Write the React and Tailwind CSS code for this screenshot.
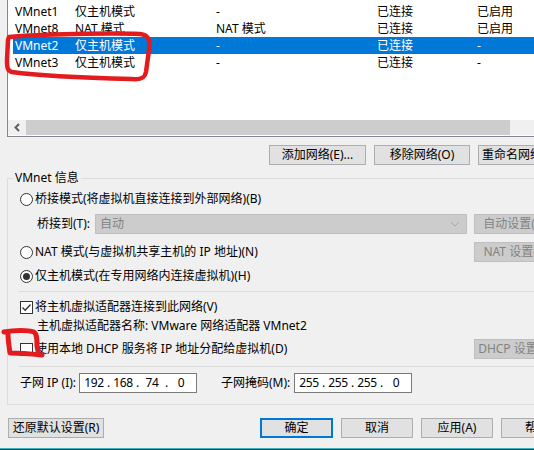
const rows = [
  { name: 'VMnet0', type: '桥接模式', ext: '自动桥接', host: '-', dhcp: '-' },
  { name: 'VMnet1', type: '仅主机模式', ext: '-', host: '已连接', dhcp: '已启用' },
  { name: 'VMnet8', type: 'NAT 模式', ext: 'NAT 模式', host: '已连接', dhcp: '已启用' },
  { name: 'VMnet2', type: '仅主机模式', ext: '-', host: '已连接', dhcp: '-', selected: true },
  { name: 'VMnet3', type: '仅主机模式', ext: '-', host: '已连接', dhcp: '-' },
]

function Radio({ checked }) {
  return (
    <span className="w-[13px] h-[13px] rounded-full border border-[#333333] bg-white flex items-center justify-center shrink-0">
      {checked && <span className="w-[7px] h-[7px] rounded-full bg-[#333333]" />}
    </span>
  )
}

function Checkbox({ checked }) {
  return (
    <span className="w-[13px] h-[13px] border border-[#333333] bg-white flex items-center justify-center shrink-0">
      {checked && (
        <svg width="11" height="11" viewBox="0 0 11 11">
          <polyline points="1.5,5.5 4.2,8.3 9.5,2.5" fill="none" stroke="#333" strokeWidth="1.3" />
        </svg>
      )}
    </span>
  )
}

function Button({ children, className = '' }) {
  return (
    <div className={`h-[20px] shrink-0 flex items-center justify-center bg-[#e1e1e1] border border-[#adadad] ${className}`}>
      {children}
    </div>
  )
}

function DisabledButton({ children }) {
  return (
    <div className="h-[20px] w-[92px] shrink-0 flex items-center justify-center bg-[#cccccc] border border-[#bfbfbf] text-[#838383]">
      {children}
    </div>
  )
}

// ip address control: four octets with dots between
function IpBox({ parts }) {
  return (
    <div className="h-[20px] w-[118px] bg-white border border-[#7a7a7a] flex items-center pl-[4px] tracking-[-0.4px]">
      {parts.map((p, i) => (
        <div key={i} className="flex items-center">
          {i > 0 && <span className="w-[9px] text-center">.</span>}
          <span className="w-[20px] text-center">{p}</span>
        </div>
      ))}
    </div>
  )
}

export default function App() {
  return (
    <div className="relative w-[534px] h-[450px] overflow-hidden bg-[#f0f0f0] text-[12px] leading-[16px] text-black font-['Noto_Sans','Noto_Sans_CJK_SC',sans-serif]">
      {/* network list */}
      <div className="ml-[7px] w-[560px] h-[137px] bg-white border-l border-b border-[#828790] flex flex-col overflow-hidden">
        <div className="flex-1 -mt-[14px]">
          {rows.map(r => (
            <div key={r.name} className={`ml-[5px] pl-[2px] h-[17px] flex items-center ${r.selected ? 'bg-[#0078d7] text-white' : ''}`}>
              <span className="w-[60px] shrink-0">{r.name}</span>
              <span className="w-[141px] shrink-0">{r.type}</span>
              <span className="w-[161px] shrink-0">{r.ext}</span>
              <span className="w-[100px] shrink-0">{r.host}</span>
              <span>{r.dhcp}</span>
            </div>
          ))}
        </div>
        <div className="h-[15px] mb-[1px] flex bg-[#f0f0f0]">
          <div className="w-[18px] flex items-center justify-center">
            <svg width="8" height="9" viewBox="0 0 8 9">
              <polyline points="6,1 2.5,4.5 6,8" fill="none" stroke="#606060" strokeWidth="2" />
            </svg>
          </div>
          <div className="w-[484px] bg-[#cdcdcd]" />
        </div>
      </div>

      {/* network buttons */}
      <div className="mt-[8px] pl-[269px] flex gap-[8px]">
        <Button className="w-[97px]">添加网络(E)...</Button>
        <Button className="w-[96px]">移除网络(O)</Button>
        <Button className="w-[96px]">重命名网络(W)...</Button>
      </div>

      {/* VMnet info group */}
      <fieldset className="mt-[5px] ml-[7px] w-[600px] border border-[#dcdcdc] pb-[11px]">
        <legend className="ml-[5px] px-[2px] leading-[16px]">VMnet 信息</legend>

        <div className="h-[26px] flex items-center gap-[2px] pl-[12px]">
          <Radio />
          <span>桥接模式(将虚拟机直接连接到外部网络)(B)</span>
        </div>
        <div className="h-[24px] flex items-center pl-[29px]">
          <span className="w-[58px]">桥接到(T):</span>
          <div className="w-[372px] h-[20px] bg-[#cccccc] border border-[#bfbfbf] flex items-center justify-between pl-[4px] pr-[6px] text-[#838383]">
            <span>自动</span>
            <svg width="10" height="6" viewBox="0 0 10 6">
              <polyline points="1,1 5,5 9,1" fill="none" stroke="#a6a6a6" strokeWidth="1" />
            </svg>
          </div>
          <div className="ml-[7px]">
            <DisabledButton>自动设置(U)...</DisabledButton>
          </div>
        </div>
        <div className="h-[32px] flex items-center pl-[12px]">
          <div className="w-[454px] flex items-center gap-[2px]">
            <Radio />
            <span>NAT 模式(与虚拟机共享主机的 IP 地址)(N)</span>
          </div>
          <DisabledButton>NAT 设置(S)...</DisabledButton>
        </div>
        <div className="h-[16px] flex items-center gap-[2px] pl-[12px]">
          <Radio checked />
          <span>仅主机模式(在专用网络内连接虚拟机)(H)</span>
        </div>

        <div className="mt-[7px] ml-[11px] h-px bg-[#dcdcdc]" />

        <div className="mt-[7px] h-[16px] flex items-center gap-[2px] pl-[12px]">
          <Checkbox checked />
          <span>将主机虚拟适配器连接到此网络(V)</span>
        </div>
        <div className="mt-[3px] h-[16px] flex items-center pl-[29px]">
          主机虚拟适配器名称: VMware 网络适配器 VMnet2
        </div>
        <div className="mt-[5px] h-[20px] flex items-center pl-[12px]">
          <div className="w-[454px] flex items-center gap-[2px]">
            <Checkbox />
            <span>使用本地 DHCP 服务将 IP 地址分配给虚拟机(D)</span>
          </div>
          <DisabledButton>DHCP 设置(P)...</DisabledButton>
        </div>

        <div className="mt-[7px] ml-[11px] h-px bg-[#dcdcdc]" />

        <div className="mt-[6px] h-[20px] flex items-center pl-[12px]">
          <span className="w-[59px]">子网 IP (I):</span>
          <IpBox parts={['192', '168', '74', '0']} />
          <span className="ml-[24px] w-[73px]">子网掩码(M):</span>
          <IpBox parts={['255', '255', '255', '0']} />
        </div>
      </fieldset>

      {/* dialog buttons */}
      <div className="mt-[13px] pl-[8px] flex">
        <Button className="w-[96px]">还原默认设置(R)</Button>
        <div className="ml-[156px] flex gap-[8px]">
          <div className="h-[20px] w-[73px] flex items-center justify-center bg-[#e1e1e1] border-2 border-[#0078d7]">确定</div>
          <Button className="w-[72px]">取消</Button>
          <Button className="w-[72px]">应用(A)</Button>
          <Button className="w-[72px]">帮助</Button>
        </div>
      </div>
      <div className="mt-[10px] h-[2px] border-t border-[#3fb0c0] bg-[#1d4a52]" />

      {/* red hand-drawn marks */}
      <svg className="absolute left-0 top-0 pointer-events-none" width="534" height="450" viewBox="0 0 534 450">
        <path d="M 9 37 C 40 34, 110 33, 140 34 C 150 35, 150 42, 149 50 L 146 72 C 145 78, 141 80, 132 79 C 90 78, 40 76, 12 72 C 7 71, 7 66, 7 60 L 8 40 Z"
          fill="none" stroke="#e31b1e" strokeWidth="4.5" strokeLinecap="round" strokeLinejoin="round" />
        <path d="M 4 332 C 15 330, 28 330, 34 332 C 37 334, 37 340, 37 346 L 38 351 M 8 334 C 8 340, 9 346, 10 353 C 20 353, 32 354, 42 355"
          fill="none" stroke="#e31b1e" strokeWidth="5" strokeLinecap="round" strokeLinejoin="round" />
      </svg>
    </div>
  )
}
